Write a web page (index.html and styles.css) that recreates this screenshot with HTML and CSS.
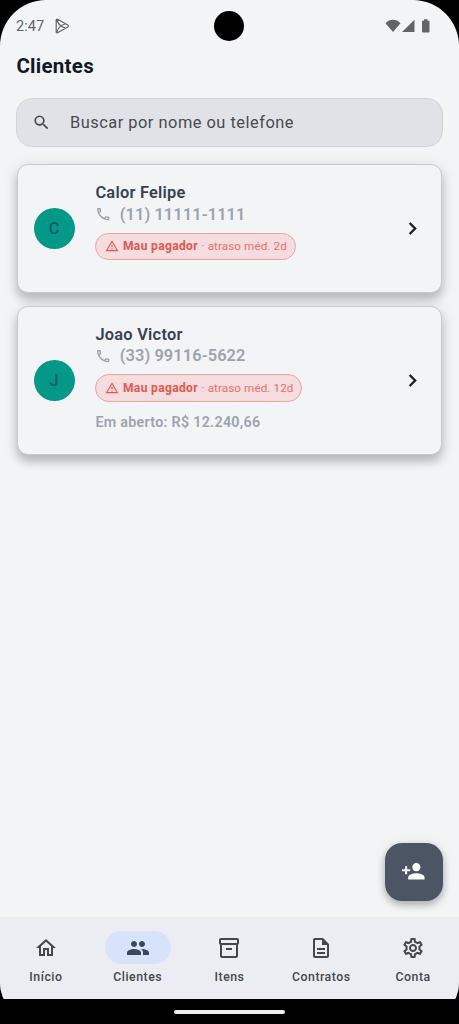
FILE: index.html
```html
<!DOCTYPE html>
<html lang="pt-BR">
<head>
<meta charset="utf-8">
<title>Clientes</title>
<link rel="stylesheet" href="styles.css">
</head>
<body>
<svg class="defs" aria-hidden="true">
  <symbol id="phone" viewBox="0 0 24 24"><path d="M6.54 5c.06.89.21 1.76.45 2.59l-1.2 1.2c-.41-1.2-.67-2.47-.76-3.79h1.51m9.86 12.02c.85.24 1.72.39 2.6.45v1.49c-1.32-.09-2.59-.35-3.8-.75l1.2-1.19M7.5 3H4c-.55 0-1 .45-1 1 0 9.39 7.61 17 17 17 .55 0 1-.45 1-1v-3.49c0-.55-.45-1-1-1-1.24 0-2.45-.2-3.57-.57-.1-.04-.21-.05-.31-.05-.26 0-.51.1-.71.29l-2.2 2.2c-2.83-1.45-5.15-3.76-6.59-6.59l2.2-2.2c.28-.28.36-.67.25-1.02C8.7 6.45 8.5 5.25 8.5 4c0-.55-.45-1-1-1z"/></symbol>
  <symbol id="warning" viewBox="0 0 24 24"><path d="M12 5.99 19.53 19H4.47L12 5.99M12 2 1 21h22L12 2zm1 14h-2v2h2v-2zm0-6h-2v4h2v-4z"/></symbol>
  <symbol id="chevron" viewBox="0 0 24 24"><path d="M10 6 8.59 7.41 13.17 12l-4.58 4.59L10 18l6-6z"/></symbol>
</svg>
<div class="screen">
  <header class="status">
    <span class="time">2:47</span>
    <svg class="play" viewBox="0 0 16 16"><path d="M2.200 2v12c0 .8.700 1 1.300.7L13.800 9c.8-.5.8-1.500 0-2L3.500 1.300C2.900 1 2.200 1.200 2.200 2zM2.900 1.700Q4.200 8 11.500 10.200M2.900 14.300Q4.200 8 11.500 5.800"/></svg>
    <i class="camera"></i>
    <svg class="signals" viewBox="0 0 46 14"><path d="M.5 4.200C4.500-.4 11.500-.4 15.500 4.200L8 13zM17 13 29.500.8V13zM37 1.700h2V.3h3.500v1.400h2V12.500a1 1 0 0 1-1 1H38a1 1 0 0 1-1-1z"/></svg>
  </header>
  <h1>Clientes</h1>
  <div class="search">
    <svg viewBox="0 0 24 24"><path d="M15.500 14h-.79l-.28-.27A6.470 6.470 0 0 0 16 9.500 6.500 6.500 0 1 0 9.500 16c1.610 0 3.090-.59 4.230-1.570l.27.28v.79l5 4.990L20.490 19l-4.990-5zm-6 0C7.010 14 5 11.990 5 9.500S7.010 5 9.500 5 14 7.010 14 9.500 11.990 14 9.500 14z"/></svg>
    <span>Buscar por nome ou telefone</span>
  </div>
  <main class="list">
    <article class="card first">
      <div class="avatar">C</div>
      <div class="info">
        <h2>Calor Felipe</h2>
        <div class="tel"><svg><use href="#phone"/></svg><span>(11) 11111-1111</span></div>
        <div class="badge"><svg><use href="#warning"/></svg><b>Mau pagador</b><span>· atraso méd. 2d</span></div>
      </div>
      <svg class="chevron"><use href="#chevron"/></svg>
    </article>
    <article class="card second">
      <div class="avatar">J</div>
      <div class="info">
        <h2>Joao Victor</h2>
        <div class="tel"><svg><use href="#phone"/></svg><span>(33) 99116-5622</span></div>
        <div class="badge"><svg><use href="#warning"/></svg><b>Mau pagador</b><span>· atraso méd. 12d</span></div>
        <div class="open">Em aberto: R$ 12.240,66</div>
      </div>
      <svg class="chevron"><use href="#chevron"/></svg>
    </article>
  </main>
  <div class="fab"><svg viewBox="0 0 24 24"><path d="M15 12c2.210 0 4-1.790 4-4s-1.790-4-4-4-4 1.790-4 4 1.790 4 4 4zm-9-2V7H4v3H1v2h3v3h2v-3h3v-2H6zm9 4c-2.670 0-8 1.340-8 4v2h16v-2c0-2.660-5.330-4-8-4z"/></svg></div>
  <nav>
    <div class="tab"><i><svg viewBox="0 0 24 24"><path d="m12 5.690 5 4.500V18h-2v-6H9v6H7v-7.810l5-4.500M12 3 2 12h3v8h6v-6h2v6h6v-8h3L12 3z"/></svg></i><span>Início</span></div>
    <div class="tab active"><i><svg viewBox="0 0 24 24"><path d="M16 11c1.660 0 2.990-1.340 2.990-3S17.660 5 16 5s-3 1.340-3 3 1.340 3 3 3zm-8 0c1.660 0 2.990-1.340 2.990-3S9.660 5 8 5 5 6.340 5 8s1.340 3 3 3zm0 2c-2.330 0-7 1.170-7 3.500V19h14v-2.500C15 14.170 10.330 13 8 13zm8 0c-.29 0-.62.020-.97.050 1.160.84 1.970 1.970 1.970 3.450V19h6v-2.500c0-2.330-4.670-3.500-7-3.500z"/></svg></i><span>Clientes</span></div>
    <div class="tab"><i><svg viewBox="0 0 24 24"><path d="M20 2H4c-1 0-2 .9-2 2v3.010c0 .72.430 1.340 1 1.690V20c0 1.100 1.100 2 2 2h14c.9 0 2-.9 2-2V8.700c.57-.35 1-.97 1-1.690V4c0-1.100-1-2-2-2zm-1 18H5V9h14v11zm1-13H4V4h16v3zM9 12h6v2H9z"/></svg></i><span>Itens</span></div>
    <div class="tab"><i><svg viewBox="0 0 24 24"><path d="M8 16h8v2H8zm0-4h8v2H8zm6-10H6c-1.100 0-2 .9-2 2v16c0 1.100.89 2 1.990 2H18c1.100 0 2-.9 2-2V8l-6-6zm4 18H6V4h7v5h5v11z"/></svg></i><span>Contratos</span></div>
    <div class="tab"><i><svg viewBox="0 0 24 24"><path d="M19.430 12.980c.04-.32.070-.64.070-.98s-.03-.66-.07-.98l2.110-1.650c.19-.15.240-.42.120-.64l-2-3.460c-.09-.16-.26-.25-.44-.25-.06 0-.12.010-.17.030l-2.490 1c-.52-.4-1.080-.73-1.690-.98l-.38-2.650C14.460 2.180 14.250 2 14 2h-4c-.25 0-.46.180-.49.420l-.38 2.650c-.61.250-1.170.590-1.690.980l-2.490-1c-.06-.02-.12-.03-.18-.03-.17 0-.34.090-.43.250l-2 3.460c-.13.220-.07.490.12.640l2.110 1.650c-.04.320-.07.650-.07.980s.03.660.07.980l-2.110 1.650c-.19.150-.24.420-.12.640l2 3.460c.09.160.26.250.44.250.06 0 .12-.01.170-.03l2.490-1c.52.400 1.080.730 1.690.980l.38 2.650c.03.240.24.420.49.420h4c.25 0 .46-.18.490-.42l.38-2.650c.61-.25 1.170-.59 1.690-.98l2.490 1c.06.020.12.030.18.030.17 0 .34-.09.430-.25l2-3.460c.12-.22.070-.49-.12-.64l-2.110-1.650zm-1.980-1.710c.04.310.05.520.05.730s-.02.430-.05.730l-.14 1.130.89.700 1.080.84-.7 1.210-1.270-.51-1.040-.42-.9.680c-.43.320-.84.560-1.250.730l-1.060.430-.16 1.130-.2 1.350h-1.400l-.19-1.350-.16-1.130-1.060-.43c-.43-.18-.83-.41-1.230-.71l-.91-.7-1.060.430-1.270.510-.7-1.210 1.080-.84.890-.7-.14-1.130c-.03-.31-.05-.54-.05-.74s.02-.43.050-.73l.14-1.130-.89-.7-1.080-.84.700-1.210 1.270.510 1.040.420.900-.68c.43-.32.840-.56 1.250-.73l1.060-.43.160-1.130.200-1.350h1.390l.19 1.350.16 1.130 1.060.430c.43.180.83.410 1.230.710l.91.700 1.060-.43 1.270-.51.700 1.210-1.070.85-.89.700.14 1.130zM12 8c-2.210 0-4 1.790-4 4s1.790 4 4 4 4-1.790 4-4-1.790-4-4-4zm0 6c-1.100 0-2-.9-2-2s.9-2 2-2 2 .9 2 2-.9 2-2 2z"/></svg></i><span>Conta</span></div>
  </nav>
  <footer><i></i></footer>
</div>
</body>
</html>
```
FILE: styles.css
```css
* { box-sizing: border-box; }
body { margin: 0; background: #000; font-family: Roboto, "Liberation Sans", sans-serif; }
svg { display: block; flex: none; fill: currentColor; }
.defs { display: none; }
.screen { position: relative; display: flex; flex-direction: column; width: 459px; height: 1024px; overflow: hidden; background: linear-gradient(#f2f4f6 998px, #000 998px); border-radius: 46px 46px 42px 42px; }

.status { position: relative; height: 52px; padding: 0 28px 0 16px; display: flex; align-items: center; color: #626467; }
.time { padding-top: 1px; font-size: 14.5px; letter-spacing: .1px; }
.play { width: 16px; height: 16px; margin-left: 10px; fill: none; stroke: currentColor; stroke-width: 1.2; }
.camera { position: absolute; left: 214.4px; top: 11px; width: 30px; height: 30px; border-radius: 50%; background: #000; }
.signals { width: 46px; height: 14px; margin-left: auto; }
h1 { margin: 0 0 0 16.4px; height: 28px; line-height: 28px; font-size: 20.5px; font-weight: 700; letter-spacing: .28px; color: #111827; }

.search { height: 49px; margin: 18px 16.4px 0; padding-left: 14.2px; display: flex; align-items: center; gap: 20px; border: 1px solid #d1d4db; border-radius: 16px; background: #e1e2e7; color: #484b50; font-size: 16.4px; line-height: 20px; letter-spacing: .5px; }
.search svg { width: 19px; height: 19px; margin-right: -.6px; }

.list { display: flex; flex-direction: column; gap: 13px; padding: 17px 16.6px 0; }
.card { display: flex; align-items: center; padding: 0 16px; border: 1px solid #c6c9d2; border-radius: 11px; background: #f2f4f6; box-shadow: 0 7px 10px rgba(0,0,0,.18), 0 3px 15px rgba(0,0,0,.12); }
.first { height: 129px; }
.second { height: 149px; }
.avatar { width: 41px; height: 41px; border-radius: 50%; background: #039887; color: #125b6d; display: grid; place-items: center; font-size: 16.4px; font-weight: 500; }
.info { align-self: stretch; flex: 1; padding: 17px 0 0 20.800px; display: flex; flex-direction: column; align-items: flex-start; }
.second .info { padding-top: 16.500px; }
h2 { margin: 0; font-size: 16.4px; line-height: 22px; font-weight: 600; letter-spacing: .25px; color: #374151; }
.tel { height: 20px; display: flex; align-items: center; gap: 8px; color: #9ca3af; font-size: 16.4px; font-weight: 600; letter-spacing: .08px; }
.tel svg { width: 16.4px; height: 16.4px; margin-top: 1px; }
.badge { height: 27.5px; margin-top: 8.600px; padding: 0 8px 0 8.600px; display: flex; align-items: center; border: 1px solid #efa19f; border-radius: 14px; background: #f5dcde; color: #e4574f; font-size: 12px; letter-spacing: .36px; }
.badge svg { width: 14px; height: 14px; margin-right: 4px; }
.badge b { font-weight: 700; margin-right: 3.600px; }
.badge span { color: #e9716b; font-size: 11.700px; letter-spacing: .08px; }
.open { margin-top: 10.500px; line-height: 20px; color: #9ca3af; font-size: 14.3px; font-weight: 600; letter-spacing: .28px; }
.chevron { width: 25px; height: 25px; color: #1b1c1f; stroke: currentColor; stroke-width: .2; }

.fab { width: 58px; height: 58px; margin: auto 16px 16px auto; border-radius: 17px; display: grid; place-items: center; background: #4b5563; color: #fff; box-shadow: 0 4px 7px rgba(0,0,0,.24), 0 1px 12px rgba(0,0,0,.10); }
.fab svg { width: 24.600px; height: 24.600px; margin: -1px 1px 0 0; }

nav { height: 82px; display: flex; background: #ecedf2; color: #44474c; }
.tab { flex: 1; padding-top: 14px; display: flex; flex-direction: column; align-items: center; gap: 5px; font-size: 12.3px; line-height: 16px; font-weight: 500; letter-spacing: .5px; }
.tab i { width: 66px; height: 33px; border-radius: 17px; display: grid; place-items: center; }
.tab svg { width: 24px; height: 24px; }
.active i { background: #d7e3f8; color: #3c4858; }
footer { height: 25px; background: #000; display: grid; place-items: center; }
footer i { width: 111px; height: 4px; border-radius: 2px; background: #ecedef; }
```
